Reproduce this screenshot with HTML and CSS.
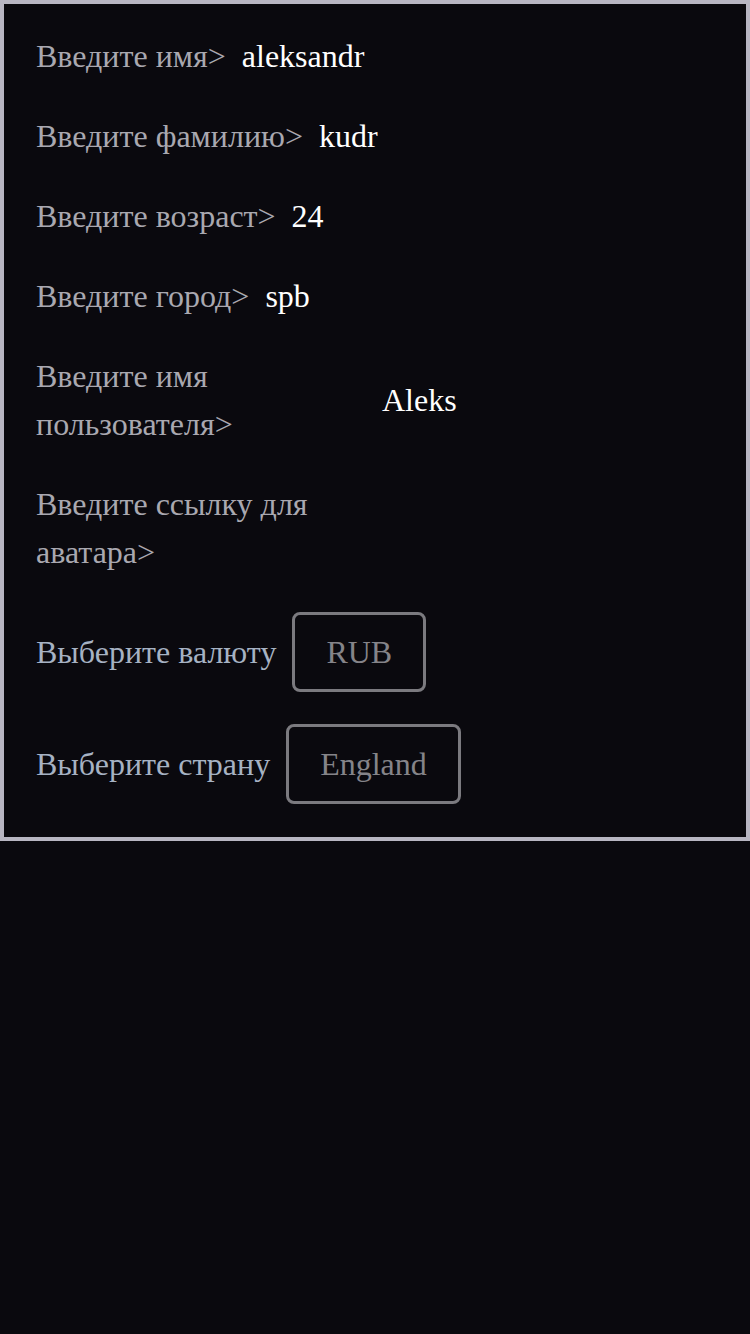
FILE: index.html
```html
<!DOCTYPE html>
<html lang="ru">
<head>
<meta charset="utf-8">
<title>Профиль</title>
<link rel="stylesheet" href="styles.css">
</head>
<body>
<form class="panel">
  <div class="row">
    <span class="label">Введите имя&gt;</span>
    <span class="value">aleksandr</span>
  </div>
  <div class="row">
    <span class="label">Введите фамилию&gt;</span>
    <span class="value">kudr</span>
  </div>
  <div class="row">
    <span class="label">Введите возраст&gt;</span>
    <span class="value">24</span>
  </div>
  <div class="row">
    <span class="label">Введите город&gt;</span>
    <span class="value">spb</span>
  </div>
  <div class="row">
    <span class="label">Введите имя пользователя&gt;</span>
    <span class="value">Aleks</span>
  </div>
  <div class="row">
    <span class="label">Введите ссылку для аватара&gt;</span>
    <span class="value"></span>
  </div>
  <div class="row select-row">
    <span class="label select-label">Выберите валюту</span>
    <button type="button" class="choice">RUB</button>
  </div>
  <div class="row select-row">
    <span class="label select-label">Выберите страну</span>
    <button type="button" class="choice">England</button>
  </div>
</form>
</body>
</html>
```
FILE: styles.css
```css
html, body {
  margin: 0;
  padding: 0;
  background: #0a090e;
}
body {
  font-family: "Liberation Serif", "Times New Roman", serif;
  font-size: 32px;
  line-height: 48px;
}
.panel {
  box-sizing: border-box;
  width: 750px;
  border: 4px solid #b8b6c2;
  background: #0a090e;
  padding: 28px 32px 37px 32px;
  display: flex;
  flex-direction: column;
  gap: 32px;
}
.row {
  display: flex;
  align-items: center;
  gap: 16px;
  min-height: 48px;
}
.label {
  color: #a9a8b0;
  max-width: 330px;
  flex: 0 0 auto;
}
.value {
  flex: 1 1 auto;
  min-width: 0;
  color: #ffffff;
  white-space: nowrap;
}
.select-row {
  margin-top: 4px;
  margin-bottom: -4px;
}
.select-label {
  color: #a6b2c3;
  max-width: none;
}
.choice {
  box-sizing: border-box;
  height: 80px;
  padding: 0 31px;
  background: transparent;
  border: 3px solid #7b7a7f;
  border-radius: 8px;
  color: #858489;
  font-family: "Liberation Serif", "Times New Roman", serif;
  font-size: 32px;
  line-height: 48px;
  cursor: pointer;
}
```
